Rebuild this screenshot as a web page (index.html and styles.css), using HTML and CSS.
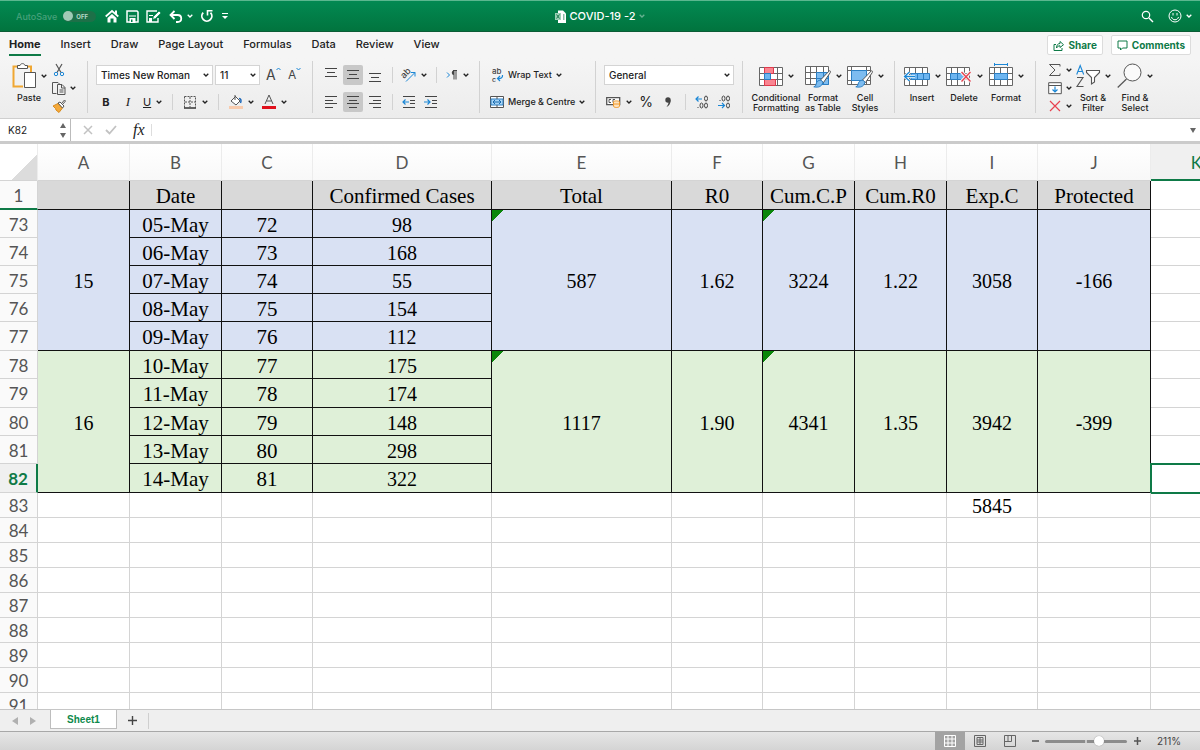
FILE: index.html
```
<!DOCTYPE html>
<html lang="en">
<head>
    <meta charset="UTF-8">
    <meta name="viewport" content="width=device-width, initial-scale=1.0">
    <title>COVID-19 -2</title>
    <link rel="stylesheet" href="styles.css">
</head>
<body>

    <!-- Shared shapes -->
    <svg class="defs" width="0" height="0">
        <symbol id="caret" viewBox="0 0 6 4"><path d="M.7.7 3 3 5.3.7" fill="none" stroke="currentColor" stroke-width="1.3"/></symbol>
        <symbol id="table" viewBox="0 0 24 19"><path d="M.5.5h23v18H.5zM.5 6.500h23M.5 12.500h23M5.500.5v18M11.500.5v18M18.500.5v18" fill="#fff" stroke="#666"/></symbol>
        <symbol id="brush" viewBox="0 0 18 18"><path d="M16.500.7c1 .2 1.200 1 .7 2L10.500 12.500 7.500 10z" fill="#fff" stroke="#555"/><path d="M7.300 10.300c2 .3 3 1.800 2 3.800-1.500 3-5 3.500-8.500 2.700 2.500-.8 2-2.200 2.700-4 .7-1.700 2.300-2.600 3.800-2.500z" fill="#7dbcf0" stroke="#2b7fc4"/></symbol>
    </svg>

    <!-- Title bar -->
    <header class="titlebar">
        <div class="quick-access">
            <label class="autosave">AutoSave<input type="checkbox" disabled><span class="switch">OFF</span></label>
            <button aria-label="Home"><svg width="14" height="14"><path d="M.7 7.500 7 2l6.300 5.500" fill="none" stroke="#fff" stroke-width="1.700"/><path d="M10 1.500h2v4h-2zM2.500 9 7 5l4.500 4v4.500h-3v-4h-3v4h-3z" fill="#fff"/></svg></button>
            <button aria-label="Save"><svg width="13" height="13"><path d="M1 1h10l1 1v10H1z" fill="none" stroke="#fff" stroke-width="1.500"/><path d="M3 5.500h7v1H3zM3.500 8h6v5h-6z" fill="#fff"/><path d="M5 9.500h1.500V12H5z" fill="#00814b"/></svg></button>
            <button aria-label="Save as"><svg width="16" height="13"><path d="M12 8v4H1V1h10" fill="none" stroke="#fff" stroke-width="1.400"/><path d="M3 5h4v1H3zM3 8h3v4H3z" fill="#fff"/><path d="m6.500 9.500 1-3L13 1l2 2-5.500 5.500z" fill="#fff" stroke="#00814b" stroke-width=".7"/></svg></button>
            <button aria-label="Undo" class="with-caret"><svg width="14" height="13"><path d="M5.500 1 1.500 5l4 4M2 5h6.500c5 0 5 7 0 7H7" fill="none" stroke="#fff" stroke-width="1.800"/></svg><svg width="6" height="4"><use href="#caret"/></svg></button>
            <button aria-label="Repeat"><svg width="14" height="14"><path d="M3.200 3.700a5 5 0 1 0 7.300 0" fill="none" stroke="#fff" stroke-width="1.800"/><path d="M7.500 6.500V1.800h5" fill="none" stroke="#fff" stroke-width="1.600"/></svg></button>
            <button aria-label="Customise"><svg width="8" height="8"><path d="M1 1.500h6" stroke="#fff"/><path d="M1 4h6L4 7z" fill="#fff"/></svg></button>
        </div>
        <div class="doc-title">
            <svg width="11" height="13"><path d="M3 .5h5l3 3V13H3z" fill="#fff"/><path d="M0 3h6v7H0z" fill="#9bd0b6"/><path d="m1.500 4.500 3 4m0-4-3 4M8 5h1.500M8 7h1.500M8 9h1.500" stroke="#187a4c"/></svg>
            <span>COVID-19 -2</span>
            <svg class="faint" width="6" height="4"><use href="#caret"/></svg>
        </div>
        <div class="title-actions">
            <button aria-label="Search"><svg width="13" height="13"><circle cx="5" cy="5" r="3.700" fill="none" stroke="#fff" stroke-width="1.200"/><path d="m8 8 4 4" stroke="#fff" stroke-width="1.400"/></svg></button>
            <button aria-label="Feedback" class="with-caret"><svg width="14" height="14"><circle cx="7" cy="7" r="6" fill="none" stroke="#fff"/><path d="M5 4v2.500M9 4v2.500M3.500 8c.8 3.700 6.200 3.700 7 0" fill="none" stroke="#fff"/></svg><svg width="6" height="4"><use href="#caret"/></svg></button>
        </div>
    </header>

    <!-- Ribbon tabs -->
    <nav class="tabs">
        <a href="#" class="active">Home</a>
        <a href="#">Insert</a>
        <a href="#">Draw</a>
        <a href="#">Page Layout</a>
        <a href="#">Formulas</a>
        <a href="#">Data</a>
        <a href="#">Review</a>
        <a href="#">View</a>
        <div class="tab-actions">
            <button><svg width="11" height="11"><path d="M3 4.500H1v6h8V8" fill="none" stroke="#0e7a47"/><path d="M3.500 8c0-3 1.500-4.500 3.500-4.500V1.500L10.500 4.700 7 7.500V5.800c-1.500 0-2.500.6-3.500 2.200z" fill="none" stroke="#0e7a47"/></svg>Share</button>
            <button><svg width="11" height="11"><path d="M1 1h9v7H5.500L3.500 10V8H1z" fill="none" stroke="#0e7a47"/></svg>Comments</button>
        </div>
    </nav>

    <!-- Home ribbon -->
    <div class="ribbon">
        <section class="group clipboard">
            <button class="big">
                <span class="big-icon"><svg width="24" height="26"><path d="M6 3.500H1.500v20H11M16 3.500h3V9" fill="none" stroke="#f0a732" stroke-width="2"/><path d="M5.500 5.500v-3H8c.5-2.500 4.500-2.500 5 0h2.500v3z" fill="#fff" stroke="#555"/><path d="M12.500 9.500h11v15h-11z" fill="#fff" stroke="#555"/></svg><svg width="6" height="4"><use href="#caret"/></svg></span>
                <span>Paste</span>
            </button>
            <div class="stack">
                <button aria-label="Cut"><svg width="14" height="14"><path d="M4 1l5 8.500M10 1 5 9.500" fill="none" stroke="#555" stroke-width="1.200"/><circle cx="4" cy="11" r="1.700" fill="none" stroke="#1b87d6"/><circle cx="10" cy="11" r="1.700" fill="none" stroke="#1b87d6"/></svg></button>
                <button aria-label="Copy"><svg width="14" height="14"><path d="M4.500 12.500h-4v-11H6L7.500 3" fill="none" stroke="#555"/><path d="M5.500 3.500h4.500l3 3v7H5.500zM9.500 4v3h3.500M7.500 9h4M7.500 11h4" fill="none" stroke="#555"/></svg><svg width="6" height="4"><use href="#caret"/></svg></button>
                <button aria-label="Format painter"><svg width="14" height="14"><path d="m1 7 5-2.500L10.500 9 7 13.500 4 11l-.5-1.500z" fill="#f4a93a" stroke="#d98b1d"/><path d="m6 4 2-1 4 4-1.500 2zM9.500 4.500 12.500 1l1 1-3 3.500" fill="#fff" stroke="#555"/></svg></button>
            </div>
        </section>

        <section class="group font">
            <div class="row">
                <div class="select font-name"><select aria-label="Font"><option>Times New Roman</option></select><svg width="6" height="4"><use href="#caret"/></svg></div>
                <div class="select font-size"><select aria-label="Font size"><option>11</option></select><svg width="6" height="4"><use href="#caret"/></svg></div>
                <button class="grow" aria-label="Increase font size">A<svg width="5" height="4"><path d="m.5 3 2-2 2 2" fill="none" stroke="#1b87d6"/></svg></button>
                <button class="grow small" aria-label="Decrease font size">A<svg width="5" height="4"><path d="m.5 1 2 2 2-2" fill="none" stroke="#1b87d6"/></svg></button>
            </div>
            <div class="row">
                <button class="tool bold">B</button>
                <button class="tool italic">I</button>
                <button class="tool pair light"><u>U</u><svg width="6" height="4"><use href="#caret"/></svg></button>
                <span class="divider"></span>
                <button class="tool pair" aria-label="Borders"><svg width="14" height="14"><path d="M1.500 1.500h11v11M1.500 1.500v11M7 2v10M2 7h10" fill="none" stroke="#555" stroke-dasharray="2 1"/><path d="M1 13h12" stroke="#333" stroke-width="1.500"/></svg><svg width="6" height="4"><use href="#caret"/></svg></button>
                <span class="divider"></span>
                <button class="tool pair" aria-label="Fill colour"><svg width="14" height="16"><path d="m6 2 5 5-4 4-5-4 4-4M6 1v5" fill="#fff" stroke="#555"/><path d="M10 4.500c2 0 2.500 2 1.500 4.500" fill="none" stroke="#1b66b8" stroke-width="1.500"/><path d="M0 12h14v3H0z" fill="#f8cbad"/></svg><svg width="6" height="4"><use href="#caret"/></svg></button>
                <button class="tool pair" aria-label="Font colour"><svg width="14" height="16"><path d="m3 10 4-9 4 9M4.500 7h5" fill="none" stroke="#555"/><path d="M0 12h14v3H0z" fill="#e0101c"/></svg><svg width="6" height="4"><use href="#caret"/></svg></button>
            </div>
        </section>

        <section class="group align">
            <div class="row">
                <button class="tool" aria-label="Top align"><svg width="14" height="14"><path d="M1 .5h12M3 4.500h8M1 8.500h12" stroke="#444"/></svg></button>
                <button class="tool on" aria-label="Middle align"><svg width="14" height="14"><path d="M1 2.500h12M3 6.500h8M1 10.500h12" stroke="#444"/></svg></button>
                <button class="tool" aria-label="Bottom align"><svg width="14" height="14"><path d="M1 5.500h12M3 9.500h8M1 13.500h12" stroke="#444"/></svg></button>
                <span class="divider"></span>
                <button class="tool pair" aria-label="Orientation"><svg width="14" height="14"><text x="-1" y="8" font-size="9" transform="rotate(-45 4 6)">ab</text><path d="m4 13.500 9-9M9 4.500h4v4" fill="none" stroke="#1b87d6"/></svg><svg width="6" height="4"><use href="#caret"/></svg></button>
                <span class="divider"></span>
                <button class="tool pair" aria-label="Text direction"><svg width="12" height="12"><path d="m1 3.500 2.500 2.500L1 8.500" fill="none" stroke="#1b87d6"/><path d="M8 1.500v9M10 1.500v9M7 1.500h4" fill="none" stroke="#444"/><path d="M8 1.500a2 2 0 0 0 0 4.500z" fill="#444"/></svg><svg width="6" height="4"><use href="#caret"/></svg></button>
            </div>
            <div class="row">
                <button class="tool" aria-label="Align left"><svg width="14" height="14"><path d="M1 1.500h12M1 5.500h8M1 8.500h12M1 12.500h8" stroke="#444"/></svg></button>
                <button class="tool on" aria-label="Centre"><svg width="14" height="14"><path d="M1 1.500h12M3 5.500h8M1 8.500h12M3 12.500h8" stroke="#444"/></svg></button>
                <button class="tool" aria-label="Align right"><svg width="14" height="14"><path d="M1 1.500h12M5 5.500h8M1 8.500h12M5 12.500h8" stroke="#444"/></svg></button>
                <span class="divider"></span>
                <button class="tool slim" aria-label="Decrease indent"><svg width="14" height="14"><path d="M1 1.500h12M8 5.500h5M8 8.500h5M1 12.500h12" stroke="#444"/><path d="M7 7H1m2.500-2.500L1 7l2.500 2.500" fill="none" stroke="#1b87d6" stroke-width="1.200"/></svg></button>
                <button class="tool slim" aria-label="Increase indent"><svg width="14" height="14"><path d="M1 1.500h12M8 5.500h5M8 8.500h5M1 12.500h12" stroke="#444"/><path d="M0 7h6M3.500 4.500 6 7 3.500 9.500" fill="none" stroke="#1b87d6" stroke-width="1.200"/></svg></button>
            </div>
        </section>

        <section class="group wrap">
            <div class="row">
                <button class="text-tool"><svg width="14" height="16"><text x="2" y="7" font-size="8">ab</text><text x="2" y="15" font-size="7">c</text><path d="M12.500 8c.5 3-2 4-5 3.500m2.500-2.500-2.500 2.500L10 14" fill="none" stroke="#1b87d6" stroke-width="1.200"/></svg>Wrap Text<svg width="6" height="4"><use href="#caret"/></svg></button>
            </div>
            <div class="row">
                <button class="text-tool"><svg width="14" height="14"><path d="M.5 1.500h13v11H.5z" fill="#fff" stroke="#555"/><path d="M1 4h12v6H1z" fill="#a9d5f5" stroke="#2b7fc4"/><path d="M7 1.500V4M7 10v2.500" stroke="#555"/><path d="M3 7h8M5 5 3 7l2 2M9 5l2 2-2 2" fill="none" stroke="#1668ad"/></svg>Merge &amp; Centre<svg width="6" height="4"><use href="#caret"/></svg></button>
            </div>
        </section>

        <section class="group number">
            <div class="row">
                <div class="select format-name"><select aria-label="Number format"><option>General</option></select><svg width="6" height="4"><use href="#caret"/></svg></div>
            </div>
            <div class="row">
                <button class="tool pair" aria-label="Currency"><svg width="15" height="13"><path d="M.7 2.700h13v7H.7z" fill="#fff" stroke="#555" stroke-width="1.300"/><path d="M5 4.500H3v3h2M9 4.500H7v3h2" fill="none" stroke="#555"/><path d="M7.500 7v4c0 2 6 2 6 0V7c0-1.500-6-1.500-6 0zm0 2h6" fill="#fde3bf" stroke="#f09a2c"/></svg><svg width="6" height="4"><use href="#caret"/></svg></button>
                <button class="tool percent">%</button>
                <button class="tool" aria-label="Comma style"><svg width="8" height="12"><circle cx="4" cy="4" r="2.700" fill="#444"/><path d="M6.700 4c0 3.500-1.700 6-4.200 7 1.500-2 2-3.500 2-5z" fill="#444"/></svg></button>
                <span class="divider"></span>
                <button class="tool slim" aria-label="Increase decimal"><svg width="14" height="14"><path d="M7 4H1m2.500-2.500L1 4l2.500 2.500" fill="none" stroke="#1b87d6" stroke-width="1.200"/><ellipse cx="11" cy="3.500" rx="1.500" ry="2.500" fill="none" stroke="#444"/><ellipse cx="6.500" cy="10.500" rx="1.500" ry="2.500" fill="none" stroke="#444"/><ellipse cx="11" cy="10.500" rx="1.500" ry="2.500" fill="none" stroke="#444"/><path d="M2.500 12.500h1" stroke="#444"/></svg></button>
                <button class="tool slim" aria-label="Decrease decimal"><svg width="14" height="14"><path d="M1 10.500h6.500M5 8l2.500 2.500L5 13" fill="none" stroke="#1b87d6" stroke-width="1.200"/><ellipse cx="11" cy="3.500" rx="1.500" ry="2.500" fill="none" stroke="#444"/><ellipse cx="6.500" cy="3.500" rx="1.500" ry="2.500" fill="none" stroke="#444"/><ellipse cx="11" cy="10.500" rx="1.500" ry="2.500" fill="none" stroke="#444"/><path d="M2.500 5.500h1" stroke="#444"/></svg></button>
            </div>
        </section>

        <section class="group styles">
            <button class="big wide">
                <span class="big-icon"><svg width="24" height="19"><use href="#table" width="24" height="19"/><path d="M5.500.5h9v6h-9zM5.500 12.500h11v6h-11z" fill="#f98591" stroke="#e03a4c"/><path d="M5.500 6.500h6v6h-6z" fill="#6db5f0" stroke="#2b7fc4"/></svg><svg width="6" height="4"><use href="#caret"/></svg></span>
                <span>Conditional<br>Formatting</span>
            </button>
            <button class="big">
                <span class="big-icon"><svg width="26" height="24"><use href="#table" width="24" height="19" y="2"/><path d="M11.500 8.500h12v12h-12z" fill="#7dbcf0" stroke="#2b7fc4"/><path d="M11.500 14.500h12M18.500 8.500v12" stroke="#2b7fc4"/><use href="#brush" width="18" height="18" x="8" y="6"/></svg><svg width="6" height="4"><use href="#caret"/></svg></span>
                <span>Format<br>as Table</span>
            </button>
            <button class="big">
                <span class="big-icon"><svg width="26" height="24"><path d="M.5 2.500h23v18H.5zM4.500 2.500v18M.5 6.500h23M.5 16.500h23M19.500 2.500v18" fill="#fff" stroke="#666"/><path d="M4.500 6.500h15v10h-15z" fill="#7dbcf0" stroke="#2b7fc4"/><use href="#brush" width="18" height="18" x="8" y="6"/></svg><svg width="6" height="4"><use href="#caret"/></svg></span>
                <span>Cell<br>Styles</span>
            </button>
        </section>

        <section class="group cells">
            <button class="big">
                <span class="big-icon"><svg width="27" height="19"><use href="#table" width="24" height="19" x="1"/><path d="M8 6.500h18.500v6H8z" fill="#6db5f0" stroke="#2b7fc4"/><path d="M14.500 6.500v6M20.500 6.500v6" stroke="#2b7fc4"/><path d="M12 9.500H1.500m5-4.500L1.500 9.500l5 4.500" fill="none" stroke="#fff" stroke-width="3"/><path d="M12 9.500H1.500m5-4.500L1.500 9.500l5 4.500" fill="none" stroke="#1b87d6" stroke-width="1.300"/></svg><svg width="6" height="4"><use href="#caret"/></svg></span>
                <span>Insert</span>
            </button>
            <button class="big">
                <span class="big-icon"><svg width="26" height="19"><use href="#table" width="24" height="19"/><path d="M4.500 6.500h13v6h-13z" fill="#6db5f0" stroke="#2b7fc4"/><path d="M11.500 6.500v6" stroke="#2b7fc4"/><path d="m15.500 5 9 9.500m0-9.500-9 9.500" stroke="#f3f3f3" stroke-width="3.500"/><path d="m15.500 5 9 9.500m0-9.500-9 9.500" stroke="#e8414f" stroke-width="1.300"/></svg><svg width="6" height="4"><use href="#caret"/></svg></span>
                <span>Delete</span>
            </button>
            <button class="big">
                <span class="big-icon"><svg width="24" height="26"><path d="M5.500 1.500h13M5.500 0v3M18.500 0v3" stroke="#1b87d6"/><use href="#table" width="24" height="19" y="4"/><path d="M5.500 10.500h13v6h-13z" fill="#6db5f0" stroke="#2b7fc4"/></svg><svg width="6" height="4"><use href="#caret"/></svg></span>
                <span>Format</span>
            </button>
        </section>

        <section class="group editing">
            <div class="stack">
                <button aria-label="AutoSum"><svg width="14" height="14"><path d="M12 3.500V1.500H1.500L7 7l-5.500 5.500H12v-2" fill="none" stroke="#555"/></svg><svg width="6" height="4"><use href="#caret"/></svg></button>
                <button aria-label="Fill"><svg width="14" height="14"><path d="M.7 1.700h12.600v11H.7zM.7 4.500h12.600" fill="#fff" stroke="#555"/><path d="M7 5.500V11M4.500 8.500 7 11l2.500-2.500" fill="none" stroke="#1b87d6" stroke-width="1.200"/></svg><svg width="6" height="4"><use href="#caret"/></svg></button>
                <button aria-label="Clear"><svg width="14" height="14"><path d="m2 2 10 10M12 2 2 12" stroke="#e8414f" stroke-width="1.200"/></svg><svg width="6" height="4"><use href="#caret"/></svg></button>
            </div>
            <button class="big">
                <span class="big-icon"><svg width="24" height="24"><path d="m.7 10.500 3.500-9 3.500 9M2 7.500h4.500" fill="none" stroke="#1b87d6" stroke-width="1.100"/><path d="M1 13.500h6l-6 9h6.500" fill="none" stroke="#555" stroke-width="1.100"/><path d="M10.500 6.500h13v2l-5 5V18l-3 2v-6.500l-5-5z" fill="#fff" stroke="#555" stroke-width="1.100"/></svg><svg width="6" height="4"><use href="#caret"/></svg></span>
                <span>Sort &amp;<br>Filter</span>
            </button>
            <button class="big">
                <span class="big-icon"><svg width="25" height="26"><circle cx="15.500" cy="9.500" r="8.500" fill="#fafafa" stroke="#555"/><path d="M9.500 16 .7 24.500" stroke="#555" stroke-width="1.200"/></svg><svg width="6" height="4"><use href="#caret"/></svg></span>
                <span>Find &amp;<br>Select</span>
            </button>
        </section>
    </div>

    <!-- Formula bar -->
    <div class="formula-bar">
        <input class="name-box" aria-label="Name box" value="K82">
        <span class="spinner"><svg width="6" height="15"><path d="M0 5h6L3 0zM0 10h6l-3 5z" fill="#666"/></svg></span>
        <button aria-label="Cancel"><svg width="10" height="10"><path d="m1 1 8 8M9 1 1 9" stroke="#c2c2c2" stroke-width="1.500"/></svg></button>
        <button aria-label="Enter"><svg width="12" height="10"><path d="m1 5 3.500 3.500L11 1" fill="none" stroke="#c2c2c2" stroke-width="1.800"/></svg></button>
        <button class="fx">fx</button>
        <input class="formula" aria-label="Formula">
        <button class="expand" aria-label="Expand"><svg width="6" height="5"><path d="M0 0h6L3 5z" fill="#666"/></svg></button>
    </div>

    <!-- Worksheet -->
    <main class="sheet">
        <table>
            <colgroup>
                <col class="w-head"><col class="w-92"><col class="w-92"><col class="w-91"><col class="w-179"><col class="w-180"><col class="w-91"><col class="w-92"><col class="w-92"><col class="w-91"><col class="w-113"><col class="w-92">
            </colgroup>
            <thead>
                <tr class="letters"><th class="corner"></th><th>A</th><th>B</th><th>C</th><th>D</th><th>E</th><th>F</th><th>G</th><th>H</th><th>I</th><th>J</th><th class="current">K</th></tr>
                <tr class="titles tall"><th class="frozen">1</th><td></td><td>Date</td><td></td><td>Confirmed Cases</td><td>Total</td><td>R0</td><td>Cum.C.P</td><td>Cum.R0</td><td>Exp.C</td><td>Protected</td><td class="plain"></td></tr>
            </thead>
            <tbody class="blue">
                <tr><th>73</th><td rowspan="5">15</td><td class="day">05-May</td><td class="day">72</td><td>98</td><td rowspan="5" class="flag">587</td><td rowspan="5">1.62</td><td rowspan="5" class="flag">3224</td><td rowspan="5">1.22</td><td rowspan="5">3058</td><td rowspan="5">-166</td><td class="plain"></td></tr>
                <tr><th>74</th><td class="day">06-May</td><td class="day">73</td><td>168</td><td class="plain"></td></tr>
                <tr><th>75</th><td class="day">07-May</td><td class="day">74</td><td>55</td><td class="plain"></td></tr>
                <tr><th>76</th><td class="day">08-May</td><td class="day">75</td><td>154</td><td class="plain"></td></tr>
                <tr class="tall"><th>77</th><td class="day">09-May</td><td class="day">76</td><td>112</td><td class="plain"></td></tr>
            </tbody>
            <tbody class="green">
                <tr><th>78</th><td rowspan="5">16</td><td class="day">10-May</td><td class="day">77</td><td>175</td><td rowspan="5" class="flag">1117</td><td rowspan="5">1.90</td><td rowspan="5" class="flag">4341</td><td rowspan="5">1.35</td><td rowspan="5">3942</td><td rowspan="5">-399</td><td class="plain"></td></tr>
                <tr class="tall"><th>79</th><td class="day">11-May</td><td class="day">78</td><td>174</td><td class="plain"></td></tr>
                <tr><th>80</th><td class="day">12-May</td><td class="day">79</td><td>148</td><td class="plain"></td></tr>
                <tr><th>81</th><td class="day">13-May</td><td class="day">80</td><td>298</td><td class="plain"></td></tr>
                <tr class="tall"><th class="current">82</th><td class="day">14-May</td><td class="day">81</td><td>322</td><td class="plain selected"></td></tr>
            </tbody>
            <tbody class="empty">
                <tr><th>83</th><td></td><td></td><td></td><td></td><td></td><td></td><td></td><td></td><td>5845</td><td></td><td></td></tr>
                <tr><th>84</th><td></td><td></td><td></td><td></td><td></td><td></td><td></td><td></td><td></td><td></td><td></td></tr>
                <tr><th>85</th><td></td><td></td><td></td><td></td><td></td><td></td><td></td><td></td><td></td><td></td><td></td></tr>
                <tr><th>86</th><td></td><td></td><td></td><td></td><td></td><td></td><td></td><td></td><td></td><td></td><td></td></tr>
                <tr><th>87</th><td></td><td></td><td></td><td></td><td></td><td></td><td></td><td></td><td></td><td></td><td></td></tr>
                <tr><th>88</th><td></td><td></td><td></td><td></td><td></td><td></td><td></td><td></td><td></td><td></td><td></td></tr>
                <tr><th>89</th><td></td><td></td><td></td><td></td><td></td><td></td><td></td><td></td><td></td><td></td><td></td></tr>
                <tr><th>90</th><td></td><td></td><td></td><td></td><td></td><td></td><td></td><td></td><td></td><td></td><td></td></tr>
                <tr><th>91</th><td></td><td></td><td></td><td></td><td></td><td></td><td></td><td></td><td></td><td></td><td></td></tr>
            </tbody>
        </table>
    </main>

    <!-- Sheet tabs -->
    <div class="sheet-tabs">
        <button class="arrow" aria-label="Previous sheet"><svg width="6" height="8"><path d="M6 0v8L0 4z" fill="#b0b0b0"/></svg></button>
        <button class="arrow" aria-label="Next sheet"><svg width="6" height="8"><path d="M0 0v8l6-4z" fill="#b0b0b0"/></svg></button>
        <button class="sheet-tab">Sheet1</button>
        <button class="add" aria-label="Add sheet"><svg width="9" height="9"><path d="M4.500 0v9M0 4.500h9" stroke="#444" stroke-width="1.400"/></svg></button>
    </div>

    <!-- Status bar -->
    <footer class="status">
        <button class="view on" aria-label="Normal view"><svg width="12" height="12"><path d="M.5.5h11v11H.5zM.5 4h11M.5 8h11M4 .5v11M8 .5v11" fill="none" stroke="#fff"/></svg></button>
        <button class="view" aria-label="Page layout view"><svg width="12" height="12"><path d="M.5.5h11v11H.5zM3 2.500h6v7H3zM6 2.500v7M3 5h6M3 7h6" fill="none" stroke="#666"/></svg></button>
        <button class="view" aria-label="Page break view"><svg width="12" height="12"><path d="M.5.5h11v11H.5zM.5 6.500h7v-6M4 .5v6" fill="none" stroke="#666"/></svg></button>
        <button class="zoom-step" aria-label="Zoom out"><svg width="8" height="8"><path d="M1 4h7" stroke="#555" stroke-width="1.500"/></svg></button>
        <input type="range" aria-label="Zoom" min="0" max="100" value="68">
        <button class="zoom-step" aria-label="Zoom in"><svg width="8" height="8"><path d="M1 4h7M4.500 0v8" stroke="#555" stroke-width="1.500"/></svg></button>
        <span class="zoom-value">211%</span>
    </footer>
</body>
</html>
```
FILE: styles.css
```
* {
    box-sizing: border-box;
}

body {
    margin: 0;
    height: 100vh;
    display: flex;
    flex-direction: column;
    overflow: hidden;
    font-family: Inter, "Liberation Sans", sans-serif;
    font-size: 11px;
    font-weight: 500;
    color: #222;
    background: #fff;
}

button,
input,
select {
    font: inherit;
    color: inherit;
    margin: 0;
    padding: 0;
    border: none;
    background: none;
}

svg {
    display: block;
    flex: none;
    overflow: visible;
}

svg text {
    fill: #444;
}

.defs {
    position: absolute;
}

/* Title bar */
.titlebar {
    flex: none;
    height: 32px;
    display: grid;
    grid-template-columns: 1fr auto 1fr;
    align-items: center;
    color: #fff;
    background: linear-gradient(#028952, #01743e);
    border-top: 1px solid #5bb78f;
    border-bottom: 1px solid #0b5c35;
}

.quick-access {
    display: flex;
    align-items: center;
    gap: 7px;
    padding-left: 16px;
}

.with-caret {
    display: flex;
    align-items: center;
    gap: 4px;
}

.autosave {
    display: flex;
    align-items: center;
    gap: 6px;
    margin-right: 2px;
    font-size: 9px;
    color: #46a17b;
}

.autosave input {
    position: absolute;
    opacity: 0;
}

.switch {
    display: flex;
    align-items: center;
    gap: 3px;
    width: 33px;
    height: 11px;
    border-radius: 6px;
    font-size: 6px;
    font-weight: 700;
    color: #b4d9c8;
    background: #1d7048;
}

.switch::before {
    content: "";
    width: 10px;
    height: 10px;
    border-radius: 50%;
    background: #9fcab6;
}

.doc-title {
    display: flex;
    align-items: center;
    gap: 4px;
}

.faint {
    opacity: 0.4;
}

.title-actions {
    display: flex;
    justify-content: flex-end;
    align-items: center;
    gap: 14px;
    padding-right: 8px;
}

/* Ribbon tabs */
.tabs {
    flex: none;
    height: 26px;
    display: flex;
    align-items: center;
    gap: 20px;
    padding: 0 9px;
    background: #f5f5f5;
}

.tabs a {
    height: 22px;
    line-height: 20px;
    color: #222;
    text-decoration: none;
}

.tabs a.active {
    font-weight: 700;
    border-bottom: 2px solid #0e7a47;
}

.tab-actions {
    display: flex;
    gap: 8px;
    margin-left: auto;
}

.tab-actions button {
    display: flex;
    align-items: center;
    gap: 4px;
    height: 20px;
    padding: 0 5px;
    font-size: 10px;
    font-weight: 700;
    color: #0e7a47;
    background: #fff;
    border: 1px solid #dcdcdc;
    border-radius: 2px;
}

/* Home ribbon */
.ribbon {
    flex: none;
    height: 61px;
    display: flex;
    padding-top: 3px;
    font-size: 9px;
    background: linear-gradient(#f5f5f5, #ececec);
    border-bottom: 1px solid #cfcfcf;
}

.group {
    flex: none;
    height: 52px;
    border-right: 1px solid #d2d2d2;
}

.row {
    display: flex;
    align-items: center;
    height: 27px;
    gap: 2px;
}

.clipboard {
    display: flex;
    width: 88px;
    padding-left: 8px;
}

.font {
    width: 225px;
    padding-left: 8px;
}

.align {
    width: 167px;
    padding-left: 8px;
}

.wrap {
    width: 116px;
    padding-left: 10px;
}

.number {
    width: 147px;
    padding-left: 8px;
}

.styles {
    display: flex;
    width: 152px;
    padding-left: 7px;
}

.cells {
    display: flex;
    width: 141px;
    padding-left: 6px;
}

.editing {
    display: flex;
    padding-left: 10px;
    border-right: none;
}

.select {
    position: relative;
    height: 20px;
    background: #fff;
    border: 1px solid #d4d4d4;
}

.select select {
    width: 100%;
    height: 18px;
    padding-left: 4px;
    font-size: 10px;
    appearance: none;
}

.select svg {
    position: absolute;
    right: 3px;
    top: 7px;
    pointer-events: none;
}

.font-name {
    width: 117px;
}

.font-size {
    width: 45px;
}

.format-name {
    width: 130px;
}

.grow {
    display: flex;
    width: 20px;
    padding-left: 4px;
    font-size: 14px;
    font-weight: 400;
    line-height: 16px;
    color: #444;
}

.grow.small {
    font-size: 12px;
}

.tool {
    display: flex;
    align-items: center;
    justify-content: center;
    width: 20px;
    height: 20px;
    border-radius: 2px;
    font-size: 11px;
}

.tool.on {
    background: #c8c8c8;
}

.tool.slim {
    width: 18px;
}

.slim + .slim {
    margin-left: 2px;
}

.tool.pair {
    width: auto;
    gap: 5px;
    padding: 0 2px;
}

.font .tool.pair {
    padding: 0 3px;
}

.tool.bold {
    font-weight: 700;
}

.tool.italic {
    font-family: "Liberation Serif", serif;
    font-style: italic;
    font-size: 13px;
}

.tool.light {
    font-weight: 400;
}

.tool.percent {
    font-size: 14px;
    font-weight: 400;
}

.divider {
    width: 1px;
    height: 16px;
    margin: 0 5px;
    background: #d2d2d2;
}

.text-tool {
    display: flex;
    align-items: center;
    gap: 4px;
}

.big {
    display: flex;
    flex-direction: column;
    align-items: center;
    width: 42px;
    line-height: 10px;
    white-space: nowrap;
}

.big.wide {
    width: 52px;
}

.big-icon {
    display: flex;
    align-items: center;
    gap: 5px;
    height: 30px;
    margin-bottom: 2px;
}

.stack {
    display: flex;
    flex-direction: column;
    gap: 4px;
    padding: 2px 0 0 2px;
}

.stack button {
    display: flex;
    align-items: center;
    gap: 4px;
}

/* Formula bar */
.formula-bar {
    flex: none;
    height: 25px;
    display: flex;
    align-items: center;
    padding-right: 4px;
    background: #fff;
    border-bottom: 3px solid #cbcbcb;
}

.formula-bar button {
    padding: 0 6px;
}

.name-box {
    width: 60px;
    padding-left: 8px;
    font-size: 10px;
    font-weight: 400;
}

.spinner {
    display: flex;
    align-items: center;
    height: 22px;
    margin-right: 6px;
    padding-right: 4px;
    border-right: 1px solid #bbb;
}

.formula-bar .fx {
    padding-left: 10px;
    font-family: "Liberation Serif", serif;
    font-style: italic;
    font-size: 16px;
}

.formula {
    flex: 1;
    min-width: 0;
    height: 12px;
    border-left: 1px solid #ddd;
}

.formula-bar .expand {
    padding: 0;
}

/* Worksheet */
.sheet {
    flex: 1;
    min-height: 0;
    overflow: hidden;
}

table {
    width: 1243px;
    table-layout: fixed;
    border-collapse: separate;
    border-spacing: 0;
}

.w-head {
    width: 38px;
}

.w-91 {
    width: 91px;
}

.w-92 {
    width: 92px;
}

.w-113 {
    width: 113px;
}

.w-179 {
    width: 179px;
}

.w-180 {
    width: 180px;
}

th,
td {
    height: 28px;
    padding: 2px 0 0;
    line-height: 22px;
    text-align: center;
    vertical-align: middle;
    border-right: 1px solid #111;
    border-bottom: 1px solid #111;
}

td {
    font-family: "Liberation Serif", serif;
    font-size: 20px;
    font-weight: 400;
    color: #000;
}

th {
    font-family: Lato, "Open Sans", sans-serif;
    font-size: 17px;
    font-weight: 400;
    color: #555;
    background: #fafafa;
    border-color: #d4d4d4;
}

.tall th,
.tall td {
    height: 29px;
}

.letters th {
    height: 37px;
    background: linear-gradient(#fff, #f8f8f8);
    border-right-color: #ececec;
}

.letters .corner {
    background: linear-gradient(135deg, transparent 50%, #dcdcdc 50%) right bottom / 26px 26px no-repeat;
}

.letters .current {
    color: #0e7a47;
    background: #f0f0f0;
    border-bottom: 2px solid #0e7a47;
}

.titles td {
    font-size: 21px;
    background: #d9d9d9;
}

.titles .frozen {
    border-bottom: 2px solid #0e7a47;
}

.day {
    font-size: 21px;
}

.blue td {
    background-color: #d9e1f3;
}

.green td {
    background-color: #dff0d8;
}

/* Green corner marker on cells with a formula warning */
.flag {
    background-image: linear-gradient(135deg, #0a860a 8px, transparent 8px);
}

tbody .current {
    font-weight: 700;
    color: #0e7a47;
    background: #f0f0f0;
    border-right: 2px solid #0e7a47;
}

.empty td {
    border-color: #d4d4d4;
}

.empty th,
.empty td {
    height: 25px;
}

tr td.plain {
    background: #fff;
    border-color: #d4d4d4;
}

tr td.selected {
    border: 1px solid #0e7a47;
    box-shadow: 0 0 0 1px #0e7a47;
}

/* Sheet tabs */
.sheet-tabs {
    flex: none;
    height: 22px;
    display: flex;
    align-items: center;
    background: #efefef;
    border-top: 1px solid #c6c6c6;
}

.arrow {
    margin-left: 12px;
}

.sheet-tab {
    align-self: flex-start;
    width: 67px;
    height: 19px;
    margin-left: 14px;
    font-family: "Liberation Sans", sans-serif;
    font-size: 10px;
    font-weight: 700;
    color: #0e8a4c;
    background: #fff;
    border: 1px solid #bdbdbd;
    border-top: none;
}

.add {
    height: 16px;
    padding: 0 11px;
    border-right: 1px solid #cfcfcf;
}

/* Status bar */
.status {
    flex: none;
    height: 19px;
    display: flex;
    justify-content: flex-end;
    align-items: center;
    padding-right: 17px;
    background: linear-gradient(#e6e6e6, #d4d4d4);
    border-top: 1px solid #a8a8a8;
}

.view {
    display: flex;
    align-items: center;
    justify-content: center;
    width: 30px;
    height: 18px;
}

.view.on {
    background: #a3a3a3;
}

.zoom-step {
    margin: 0 6px;
}

.status input {
    width: 82px;
    height: 12px;
    appearance: none;
}

.status input::-webkit-slider-runnable-track {
    height: 3px;
    border-radius: 2px;
    background: linear-gradient(90deg, #8c8c8c 40px, #ccc 40px, #ccc 42px, #8c8c8c 42px);
}

.status input::-webkit-slider-thumb {
    appearance: none;
    width: 10px;
    height: 10px;
    margin-top: -4px;
    border-radius: 50%;
    background: #fff;
    box-shadow: 0 0 1px #777;
}

.zoom-value {
    width: 26px;
    margin-left: 10px;
    font-size: 10px;
    font-weight: 400;
    color: #444;
}
```
